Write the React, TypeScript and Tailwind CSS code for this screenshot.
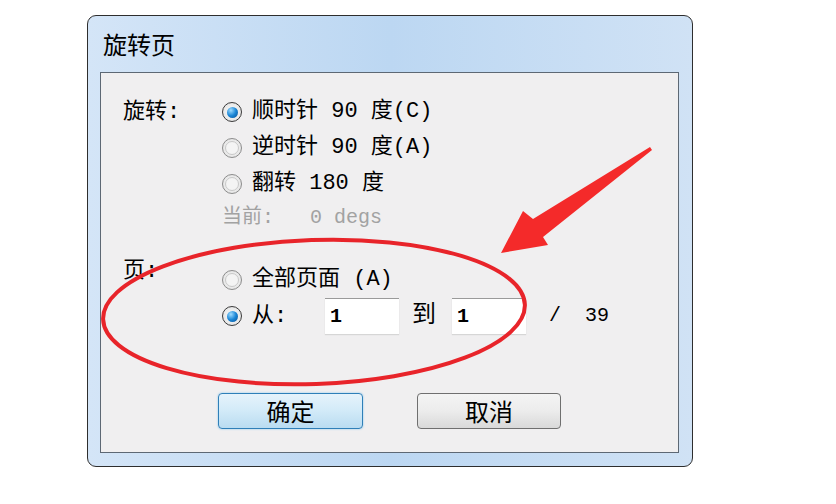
import React from 'react';

const cjk = { fontFamily: '"Liberation Mono", "Noto Sans CJK SC", monospace' };

function Radio({ checked }: { checked?: boolean }) {
    return (
        <span
            className={`relative flex h-[20px] w-[20px] shrink-0 items-center justify-center rounded-full border bg-radial from-[#ffffff] to-[#dcdcdc] ${checked ? 'border-[#3a3a3a]' : 'border-[#8c8c8c]'}`}
        >
            {checked ? (
                <span className="h-[11px] w-[11px] rounded-full bg-radial-[at_35%_30%] from-[#9fdcff] via-[#1a86d6] to-[#0a4f92]" />
            ) : (
                <span className="h-[14px] w-[14px] rounded-full border border-[#c8c8c8] bg-[#f4f4f4]" />
            )}
        </span>
    );
}

function Option({ checked, children }: { checked?: boolean; children: React.ReactNode }) {
    return (
        <div className="flex h-[36px] items-center gap-[10px]">
            <Radio checked={checked} />
            <span className="whitespace-pre text-[22px] leading-none text-black">{children}</span>
        </div>
    );
}

function Field({ value }: { value: string }) {
    return (
        <div className="flex h-[36px] w-[74px] items-center border-t border-[#9a9a9a] bg-white pl-[5px] text-[20px] font-bold text-black shadow-[0_1px_1px_#d6d6d6]">
            {value}
        </div>
    );
}

export default function App() {
    return (
        <div className="relative h-[504px] w-[836px] overflow-hidden bg-white pl-[87px] pt-[15px]" style={cjk}>
            {/* Dialog window */}
            <div className="flex h-[452px] w-[606px] flex-col rounded-[9px] border border-[#2e2e2e] bg-linear-to-r from-[#d4e5f7] via-[#bcd7f2] to-[#d0e2f5]">
                <div
                    className="flex h-[56px] items-center pl-[15px] text-[24px] text-black"
                    style={{ fontFamily: '"Noto Sans CJK SC", sans-serif' }}
                >
                    旋转页
                </div>

                <div className="ml-[12px] h-[381px] w-[579px] border border-[#5d6874] bg-[#f0eff0] pl-[22px] pt-[21px]">
                    {/* Rotation */}
                    <div className="flex">
                        <div className="flex h-[36px] w-[99px] items-center text-[22px] text-black">旋转:</div>
                        <div className="flex flex-col">
                            <Option checked>顺时针 90 度(C)</Option>
                            <Option>逆时针 90 度(A)</Option>
                            <Option>翻转 180 度</Option>
                            <div className="flex h-[32px] items-center whitespace-pre text-[20px] text-[#a2a2a2]">当前:   0 degs</div>
                        </div>
                    </div>

                    {/* Pages */}
                    <div className="mt-[28px] flex">
                        <div className="w-[99px] text-[22px] leading-[20px] text-black">页:</div>
                        <div className="flex flex-col">
                            <Option>全部页面 (A)</Option>
                            <div className="flex h-[36px] items-center">
                                <Radio checked />
                                <span className="ml-[10px] w-[73px] text-[22px] text-black">从:</span>
                                <Field value="1" />
                                <span className="ml-[13px] mr-[16px] text-[24px] text-black">到</span>
                                <Field value="1" />
                                <span className="ml-[23px] text-[20px] text-black">/</span>
                                <span className="ml-[24px] text-[20px] text-black">39</span>
                            </div>
                        </div>
                    </div>

                    {/* Buttons */}
                    <div
                        className="mt-[59px] flex gap-[54px] pl-[95px] text-[24px] text-black"
                        style={{ fontFamily: '"Noto Sans CJK SC", sans-serif' }}
                    >
                        <button className="flex h-[36px] w-[145px] items-center justify-center rounded-[4px] border border-[#2f7fb8] bg-linear-to-b from-[#e6f3fb] via-[#d2eaf8] to-[#b9dcf1] shadow-[0_0_2px_#7cc4ee]">
                            确定
                        </button>
                        <button className="flex h-[36px] w-[144px] items-center justify-center rounded-[4px] border border-[#6f6f6f] bg-linear-to-b from-[#f4f4f4] via-[#ececec] to-[#d9d9d9]">
                            取消
                        </button>
                    </div>
                </div>
            </div>

            {/* Red annotations */}
            <svg className="pointer-events-none absolute left-0 top-0" width="836" height="504" viewBox="0 0 836 504">
                <ellipse
                    cx="314"
                    cy="312"
                    rx="211"
                    ry="72"
                    transform="rotate(-2 314 312)"
                    fill="none"
                    stroke="#e8242a"
                    strokeWidth="4"
                />
                <polygon
                    points="650,147 533,219 523,211 501,253 548,245 543,237 652,150"
                    fill="#f42a2a"
                />
            </svg>
        </div>
    );
}
